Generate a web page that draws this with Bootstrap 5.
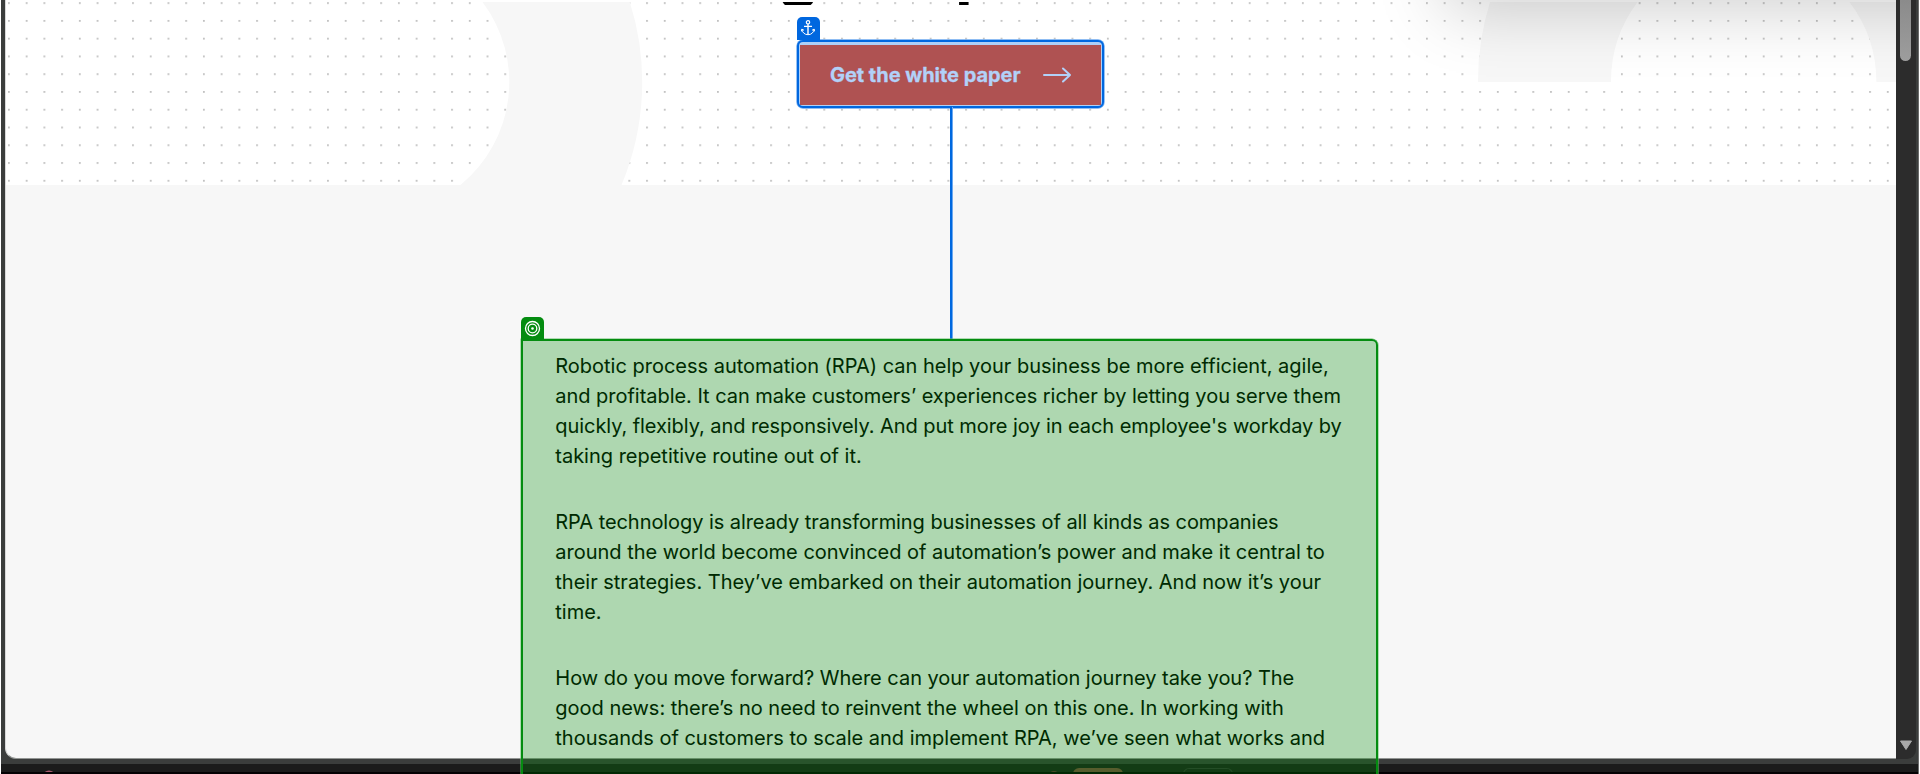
<!DOCTYPE html>
<html lang="en">
<head>
<meta charset="utf-8">
<meta name="viewport" content="width=device-width, initial-scale=1">
<title>White paper</title>
<link href="https://cdn.jsdelivr.net/npm/bootstrap@5.3.0/dist/css/bootstrap.min.css" rel="stylesheet">
<style>
  body { font-family: Inter, "Liberation Sans", sans-serif; height: 774px; background: #fff; color: #000; }
  .window-frame { height: 774px; margin: 0 1px; background: #3b3d3c; }
  .window-main { height: 759px; padding-left: 4px; }
  .page-pane { background: #f7f7f7; border-left: 1px solid #d8d8d8; border-bottom: 1px solid #929593; border-bottom-left-radius: 11px; }
  .hero { height: 185px; background: #fff; padding-right: 1px; }
  .hero-art { top: 0; left: -6px; }
  .menu-shadow { left: 1438px; top: -300px; width: 620px; height: 290px; box-shadow: 0 20px 64px rgba(0,0,0,.19); }
  .headline { top: 2px; left: 772px; height: 3px; font-size: 65px; font-weight: 700; line-height: 78px; }
  .headline span { margin-top: -69px; }
  .cta { width: 307px; height: 68px; margin-top: 39.5px; background: #afd0f7; border: 2px solid #0067df; border-radius: 6px; box-shadow: 0 0 0 .7px #6ba8ef; padding: 3px 1px 0 1px; }
  .cta-fill { background: #af5252; color: #b2d1f8; border: 0; border-radius: 0; font-size: 20px; font-weight: 700; letter-spacing: -.03px; -webkit-text-stroke: .3px #b2d1f8; padding: 0 30px 0 30px; height: 60px; }
  .tag { width: 22.5px; height: 22.5px; border-radius: 5px 5px 0 0; left: -2px; top: -24.5px; }
  .tag-anchor { background: #0067df; }
  .tag-target { background: #048c10; left: 0; top: -22.5px; }
  .link-line { width: 3px; left: 150.5px; top: 65px; height: 232px; background: linear-gradient(90deg, #0068df 2px, #6ba8ef 2px); }
  .copy { width: 857px; margin: 154.3px 2.4px 0 0; padding: 12px 0 0 34px; height: 434.7px; font-size: 20px; line-height: 30px; z-index: 2; }
  .copy p { margin-bottom: 36px; white-space: nowrap; -webkit-text-stroke: .06px #000; letter-spacing: -.008px; }
  .snug { letter-spacing: -.03px; }
  .snugger { letter-spacing: -.065px; }
  .copy-highlight { background: rgba(0,139,8,.295); border: 2px solid #048c10; border-bottom: 0; border-radius: 0 6px 0 0; box-shadow: 0 0 0 .5px #6bbd70; }
  .scroll-track { width: 20px; margin-right: 3px; padding-right: 1px; background: #2c2c2c; border-bottom-right-radius: 9px; }
  .scroll-thumb { width: 11px; height: 61px; background: linear-gradient(#8b8b8b, #9d9d9d); border-radius: 0 0 6px 6px; }
  .edge { width: 1px; background: #6b6b6b; right: 1px; top: 0; height: 774px; }
  .dock { height: 10px; background: #1b1b1b; border-bottom: 2px solid #030103; }
  .dock-item { width: 50px; height: 6px; margin-top: 4px; border-radius: 6px 6px 0 0; }
</style>
<script src="https://cdn.jsdelivr.net/npm/bootstrap@5.3.0/dist/js/bootstrap.bundle.min.js"></script>
</head>
<body class="overflow-hidden position-relative">
<div class="window-frame d-flex flex-column justify-content-between overflow-hidden">
  <div class="window-main d-flex">
    <main class="page-pane flex-fill d-flex flex-column align-items-center">
      <section class="hero w-100 flex-shrink-0 d-flex justify-content-center align-items-start position-relative">
        <div class="position-absolute top-0 start-0 w-100 h-100 overflow-hidden">
          <svg class="hero-art position-absolute" width="1896" height="185">
            <defs>
              <pattern id="dots" x="8" y="2.2" width="17.725" height="17.765" patternUnits="userSpaceOnUse">
                <rect width="1.8" height="1.8" fill="#c0c0c0"/>
              </pattern>
            </defs>
            <rect width="1896" height="185" fill="url(#dots)"/>
            <g fill="#f7f7f7">
              <path d="M482.5 2A133 133 0 0 1 460.5 185H621.5A265.7 265.7 0 0 0 629.8 2Z"/>
              <path d="M1490 2A265.7 265.7 0 0 0 1478 82H1611A132.7 132.7 0 0 1 1637.6 2Z"/>
              <path d="M1849.5 2A132.7 132.7 0 0 1 1876.4 82H1896V2Z"/>
            </g>
          </svg>
          <div class="menu-shadow position-absolute"></div>
          <div class="headline position-absolute d-flex overflow-hidden"><span>g</span><span style="margin-left:136px">p</span></div>
        </div>
        <div class="cta position-relative">
          <button class="cta-fill btn w-100 d-flex align-items-center justify-content-between">
            <span>Get the white paper</span>
            <svg width="28" height="16" fill="none" stroke="#b2d1f8" stroke-width="2" stroke-linecap="round" stroke-linejoin="round"><path d="M1 8H27M20 1.5L27 8L20 14.5"/></svg>
          </button>
          <span class="tag tag-anchor position-absolute d-flex align-items-center justify-content-center">
            <svg width="14" height="16" viewBox="0 0 14 16" fill="none" stroke="#fff" stroke-width="1.2"><circle cx="7" cy="2.3" r="1.7"/><path d="M7 4V14.6M3 6.4H11" stroke-width="1.4"/><path d="M.8 9.2C1.3 12.4 3.5 14.7 7 14.7S12.7 12.4 13.2 9.2M.4 11.4L.9 9.1L3 10.3M13.6 11.4L13.1 9.1L11 10.3" stroke-width="1"/></svg>
          </span>
          <span class="link-line position-absolute"></span>
        </div>
      </section>
      <article class="copy position-relative flex-shrink-0">
        <p>Robotic process automation (RPA) can help your business be more efficient, agile,<br><span class="snug">and profitable. It can make customers’ experiences richer by letting you serve them</span><br><span class="snugger">quickly, flexibly, and responsively. And put more joy in each employee's workday by</span><br>taking repetitive routine out of it.</p>
        <p><span class="snugger">RPA technology is already transforming businesses of all kinds as companies</span><br>around the world become convinced of automation’s power and make it central to<br>their strategies. They’ve embarked on their automation journey. And now it’s your<br>time.</p>
        <p class="mb-0"><span class="snug">How do you move forward? Where can your automation journey take you? The</span><br>good news: there’s no need to reinvent the wheel on this one. In working with<br>thousands of customers to scale and implement RPA, we’ve seen what works and</p>
        <div class="copy-highlight position-absolute top-0 start-0 w-100 h-100"></div>
        <span class="tag tag-target position-absolute d-flex align-items-center justify-content-center">
          <svg width="17" height="17" fill="none" stroke="#fff" stroke-width="1.3"><circle cx="8.5" cy="8.5" r="7"/><circle cx="8.5" cy="8.5" r="4.3"/><circle cx="8.5" cy="8.5" r="1.3" fill="#fff" stroke="none"/></svg>
        </span>
      </article>
    </main>
    <aside class="scroll-track d-flex flex-column align-items-center justify-content-between">
      <div class="scroll-thumb"></div>
      <svg class="mb-2" width="14" height="11"><path d="M1.5 1H12.5L7 9.5Z" fill="#a9a9a9" stroke="#a9a9a9" stroke-linejoin="round"/></svg>
    </aside>
  </div>
  <footer class="dock d-flex overflow-hidden">
    <svg width="1072" height="8"><circle cx="48" cy="13.5" r="7" fill="#a85a6e"/><circle cx="1053" cy="13" r="6" fill="#6b3138"/></svg>
    <span class="dock-item" style="background:#7c4a3e"></span>
    <span class="dock-item" style="margin-left:60px;border:1px solid #343434;border-bottom:0"></span>
  </footer>
</div>
<span class="edge position-absolute"></span>
</body>
</html>
